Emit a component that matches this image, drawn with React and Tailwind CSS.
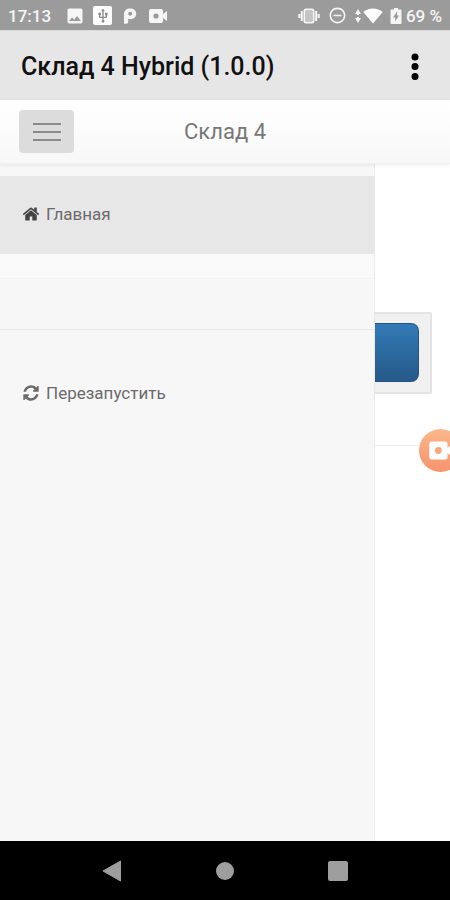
import React, { useState } from 'react';
import { MdImage, MdUsb, MdRemoveCircleOutline } from 'react-icons/md';

const HomeIcon = () => (
  <svg viewBox="0 0 1792 1792" className="w-[18px] h-[18px]" fill="currentColor" aria-hidden="true">
    <path d="M1472 992v480q0 26-19 45t-45 19h-384v-384h-256v384h-384q-26 0-45-19t-19-45v-480q0-1 .5-3t.5-3l575-474 575 474q1 2 1 6zm223-69l-62 74q-8 9-21 11h-3q-13 0-21-7l-692-577-692 577q-12 8-24 7-13-2-21-11l-62-74q-8-10-7-23.5t11-21.5l719-599q32-26 76-26t76 26l244 204v-195q0-14 9-23t23-9h192q14 0 23 9t9 23v408l219 182q10 8 11 21.5t-7 23.5z" />
  </svg>
);

const RefreshIcon = () => (
  <svg viewBox="-128 -128 1792 1792" className="w-[18px] h-[18px]" fill="currentColor" aria-hidden="true">
    <path d="M1511 928q0 5-1 7-64 268-268 434.5t-478 166.5q-146 0-282.5-55t-243.5-157l-129 129q-19 19-45 19t-45-19-19-45v-448q0-26 19-45t45-19h448q26 0 45 19t19 45-19 45l-137 137q71 66 161 102t187 36q134 0 250-65t186-179q11-17 53-117 8-23 30-23h192q13 0 22.5 9.5t9.5 22.5zm25-800v448q0 26-19 45t-45 19h-448q-26 0-45-19t-19-45 19-45l138-138q-148-137-349-137-134 0-250 65t-186 179q-11 17-53 117-8 23-30 23h-199q-13 0-22.5-9.5t-9.5-22.5v-7q65-268 270-434.5t480-166.5q146 0 284 55.5t245 156.5l130-129q19-19 45-19t45 19 19 45z" />
  </svg>
);

const CameraIcon = ({ className, dot }) => (
  <svg viewBox="0 0 20 16" className={className} fill="currentColor" aria-hidden="true">
    <path d="M3 1h10a2 2 0 0 1 2 2v3l4-3v10l-4-3v3a2 2 0 0 1-2 2H3a2 2 0 0 1-2-2V3a2 2 0 0 1 2-2z" />
    <circle cx="8" cy="8" r="2.6" fill={dot} />
  </svg>
);

const StatusBar = () => (
  <div className="h-[30px] shrink-0 bg-[#9b9b9b] text-white/90 flex items-center justify-between px-2 pt-px">
    <div className="flex items-center">
      <span className="text-[17px] leading-6 font-medium w-[57px]">17:13</span>
      <MdImage className="w-5 h-5" />
      <span className="ml-2 w-[19px] h-[19px] bg-white text-[#8a8a8a] flex items-center justify-center rounded-xs">
        <MdUsb className="w-4 h-4" />
      </span>
      <svg viewBox="0 0 14 16" className="ml-[11px] w-[14px] h-4" aria-hidden="true">
        <path
          fill="currentColor"
          fillRule="evenodd"
          d="M1 6C1 2.500 3.800 .5 7.200 .5c3.600 0 6 2.200 6 5.300 0 3.300-2.500 5.400-5.800 5.400-.9 0-1.600-.1-2.200-.4V14c0 1-.7 1.700-2.200 1.700H1zM7.200 3.800c-1.200 0-2 .8-2 2s.8 1.900 2 1.900 2-.8 2-1.900-.8-2-2-2z"
        />
      </svg>
      <CameraIcon className="ml-[11px] w-5 h-4" dot="#9b9b9b" />
    </div>
    <div className="flex items-center">
      <svg viewBox="0 0 22 16" className="w-[22px] h-4" fill="none" stroke="currentColor" aria-hidden="true">
        <rect x="6.500" y="1.500" width="9" height="13" rx="1.500" strokeWidth="2" />
        <path d="M3.800 3v10M18.200 3v10M1.300 6v4M20.700 6v4" strokeWidth="2" />
        <path d="M8 3h6v10H8z" fill="currentColor" opacity=".45" stroke="none" />
      </svg>
      <MdRemoveCircleOutline className="ml-2 w-[19px] h-[19px]" />
      <svg viewBox="0 0 6 14" className="ml-2 w-[6px] h-[14px]" fill="currentColor" aria-hidden="true">
        <path d="M3 0l3 5H4v1H2V5H0zM3 14L0 9h2V8h2v1h2z" />
      </svg>
      <svg viewBox="0 0 20 16" className="ml-[2px] w-5 h-4 text-white" fill="currentColor" aria-hidden="true">
        <path d="M10 15.500L.3 4C3 1.700 6.300 .5 10 .5S17 1.700 19.700 4z" />
      </svg>
      <svg viewBox="0 0 12 16" className="ml-[7px] w-3 h-4" fill="currentColor" aria-hidden="true">
        <path fillRule="evenodd" d="M4 0h4v1.500h2.500q1 0 1 1V15q0 1-1 1h-9q-1 0-1-1V2.500q0-1 1-1H4zM7 3.500L3 9.500h2.300v4L9 7.500H7z" />
      </svg>
      <span className="text-[17px] leading-6 font-medium ml-1">69 %</span>
    </div>
  </div>
);

const menuItems = [
  { id: 'home', label: 'Главная', icon: <HomeIcon /> },
  { id: 'restart', label: 'Перезапустить', icon: <RefreshIcon /> },
];

const MenuLink = ({ item, active, onSelect }) => (
  <a
    href={`#${item.id}`}
    onClick={() => onSelect(item.id)}
    className={`h-[78px] flex items-center gap-[6px] pl-[22px] pb-[2px] text-[17px] leading-6 text-[#6b6b6b] ${active ? 'bg-[#e7e7e7]' : ''}`}
  >
    <span className={`w-[18px] flex justify-center ${active ? 'text-[#444]' : ''}`}>{item.icon}</span>
    {item.label}
  </a>
);

export default function App() {
  const [current, setCurrent] = useState('home');
  const [open, setOpen] = useState(true);

  return (
    <div className="min-h-screen flex flex-col bg-white font-[Roboto,sans-serif]">
      <StatusBar />

      <header className="h-[70px] shrink-0 bg-[#e6e6e6] flex items-center justify-between pl-[21px] pr-[25px] pt-[2px] border-t border-[#dcdcdc]">
        <h1 className="text-[25px] leading-8 font-medium text-[#111]">Склад 4 Hybrid (1.0.0)</h1>
        <button type="button" aria-label="Ещё" className="w-5 flex justify-center text-black">
          <svg viewBox="0 0 8 28" className="w-2 h-7" fill="currentColor" aria-hidden="true">
            <circle cx="4" cy="4" r="3.500" />
            <circle cx="4" cy="13.500" r="3.500" />
            <circle cx="4" cy="23.500" r="3.500" />
          </svg>
        </button>
      </header>

      <nav className="h-16 shrink-0 grid grid-cols-[1fr_auto_1fr] items-center px-[19px] bg-linear-to-b from-white to-[#f8f8f8] border-b border-[#f0f0f0] shadow-[0_1px_4px_rgba(0,0,0,0.08)] z-10">
        <button
          type="button"
          aria-label="Меню"
          aria-expanded={open}
          onClick={() => setOpen(!open)}
          className="w-[55px] h-[43px] rounded bg-[#dcdcdc] flex flex-col items-center justify-center gap-[6px]"
        >
          <span className="w-7 h-[2px] bg-[#8a8a8a]" />
          <span className="w-7 h-[2px] bg-[#8a8a8a]" />
          <span className="w-7 h-[2px] bg-[#8a8a8a]" />
        </button>
        <span className="text-[22px] leading-8 text-[#777]">Склад 4</span>
      </nav>

      <main className="flex-1 flex overflow-hidden">
        {open && (
          <aside className="w-5/6 shrink-0 bg-[#f7f7f7] border-r border-[#e9e9e9] pt-3">
            <MenuLink item={menuItems[0]} active={current === 'home'} onSelect={setCurrent} />
            <div className="h-[25px] bg-[#f9f9f9] border-b border-[#f3f3f3]" />
            <div className="h-[51px] border-b border-[#e9e9e9]" />
            <div className="pt-[25px]">
              <MenuLink item={menuItems[1]} active={current === 'restart'} onSelect={setCurrent} />
            </div>
          </aside>
        )}
        <section className="flex-1 pt-[148px]">
          <div className="mr-[18px] h-[82px] py-[9px] pr-[11px] bg-[#f0f0f0] border-2 border-l-0 border-[#e4e4e4] rounded-r-xs">
            <button
              type="button"
              aria-label="Открыть"
              className="block w-full h-[59px] rounded-r-lg bg-linear-to-b from-[#337ab7] to-[#265a88] border border-l-0 border-[#245580]"
            />
          </div>
          <hr className="mt-[51px] border-[#eee]" />
        </section>
      </main>

      {/* floating screen recorder bubble, half tucked behind the edge */}
      <div className="fixed top-[429px] right-0 w-[31px] h-[43px] overflow-hidden z-20">
        <button
          type="button"
          aria-label="Запись экрана"
          className="w-[43px] h-[43px] rounded-full bg-linear-to-b from-[#fbb68a] to-[#f5946e] text-white flex items-center pl-[9px]"
        >
          <CameraIcon className="w-[26px] h-[21px]" dot="#f9a57c" />
        </button>
      </div>

      <footer className="h-[59px] shrink-0 bg-black grid grid-cols-[1fr_113px_113px_113px_1fr] items-center justify-items-center">
        <button type="button" aria-label="Назад" className="col-start-2 text-[#9e9e9e]">
          <svg viewBox="0 0 20 22" className="w-5 h-[22px]" fill="currentColor" aria-hidden="true">
            <path d="M18.500 1v20L1 11z" stroke="currentColor" strokeLinejoin="round" />
          </svg>
        </button>
        <button type="button" aria-label="Домой" className="w-[18px] h-[18px] rounded-full bg-[#9e9e9e]" />
        <button type="button" aria-label="Недавние" className="w-5 h-5 rounded-xs bg-[#9e9e9e]" />
      </footer>
    </div>
  );
}
